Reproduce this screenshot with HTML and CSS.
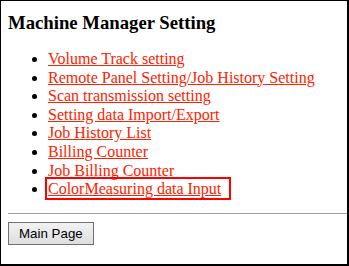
FILE: index.html
```html
<!DOCTYPE html>
<html lang="en">
<head>
    <meta charset="UTF-8">
    <title>Machine Manager Setting</title>
    <link rel="stylesheet" href="styles.css">
</head>
<body>
    <div class="frame">
        <h3 class="title">Machine Manager Setting</h3>
        <ul class="menu">
            <li><a href="#">Volume Track setting</a></li>
            <li><a href="#">Remote Panel Setting/Job History Setting</a></li>
            <li><a href="#">Scan transmission setting</a></li>
            <li><a href="#">Setting data Import/Export</a></li>
            <li><a href="#">Job History List</a></li>
            <li><a href="#">Billing Counter</a></li>
            <li><a href="#">Job Billing Counter</a></li>
            <li><span class="picked"><a href="#">ColorMeasuring data Input</a></span></li>
        </ul>
        <hr class="rule">
        <button class="back">Main Page</button>
    </div>
</body>
</html>
```

FILE: styles.css
```css
html, body {
    margin: 0;
    padding: 0;
    background: #fff;
}

.frame {
    box-sizing: border-box;
    width: 349px;
    height: 266px;
    border: 1px solid #000;
    border-right-width: 2px;
    border-bottom-width: 2px;
    padding: 1px 0 0 7px;
    font-family: "Liberation Serif", "Times New Roman", serif;
    font-size: 16px;
}

.title {
    font-size: 18.72px;
    font-weight: bold;
    margin: 10px 0 16px 0;
}

.menu {
    margin: 0;
    padding-left: 40px;
    line-height: 18.6px;
}

.menu a {
    color: #ff2200;
}

.picked {
    border: 2px solid #ff0000;
    padding: 1px 8px 1px 1px;
    margin-left: -3px;
}

.rule {
    margin: 14px 0 8px 0;
    border: 0;
    border-top: 1px solid #a0a0a0;
}

.back {
    font-family: "Liberation Sans", Arial, sans-serif;
    font-size: 13.333px;
    padding: 3px 10px;
    border: 1px solid #707070;
    border-radius: 0;
    background: linear-gradient(#f2f2f2, #dedede);
    color: #000;
}
```
